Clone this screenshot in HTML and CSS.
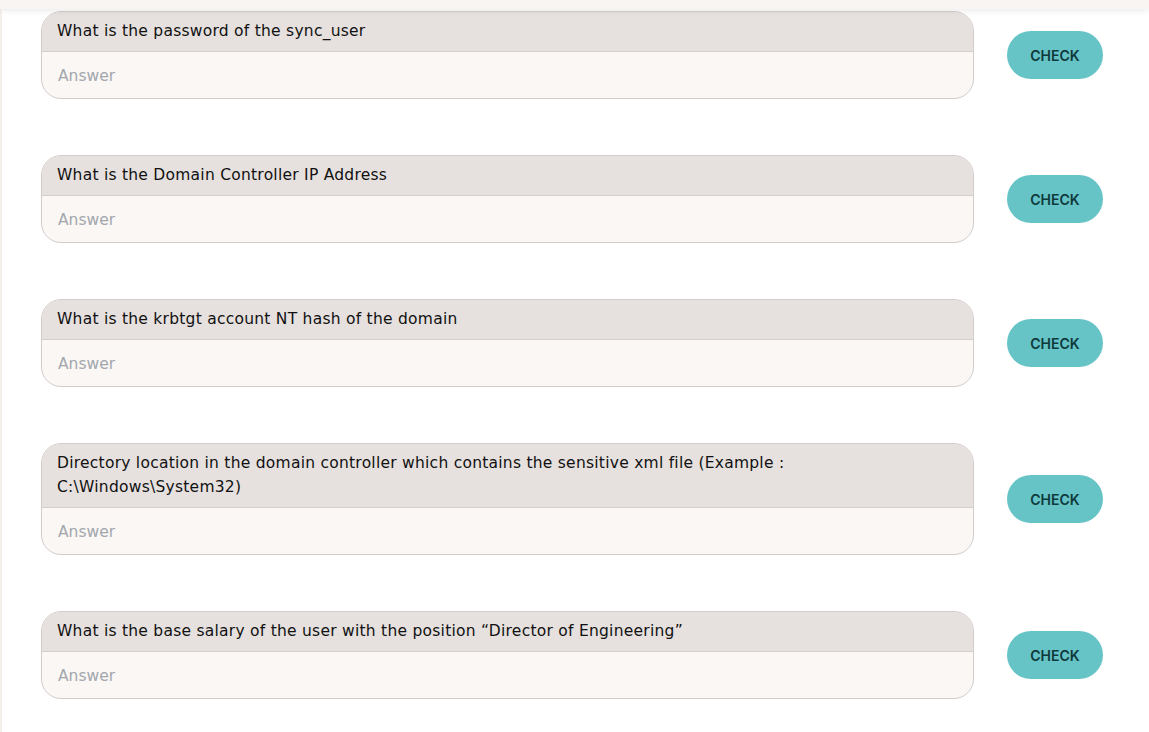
FILE: index.html
```html
<!DOCTYPE html>
<html lang="en">
<head>
<meta charset="utf-8">
<title>Questions</title>
<link rel="stylesheet" href="styles.css">
</head>
<body>
<div class="topbar"></div>
<main class="page">
  <div class="row">
    <div class="card">
      <div class="question">What is the password of the sync_user</div>
      <input class="answer" type="text" placeholder="Answer">
    </div>
    <button class="check">CHECK</button>
  </div>
  <div class="row">
    <div class="card">
      <div class="question">What is the Domain Controller IP Address</div>
      <input class="answer" type="text" placeholder="Answer">
    </div>
    <button class="check">CHECK</button>
  </div>
  <div class="row">
    <div class="card">
      <div class="question">What is the krbtgt account NT hash of the domain</div>
      <input class="answer" type="text" placeholder="Answer">
    </div>
    <button class="check">CHECK</button>
  </div>
  <div class="row">
    <div class="card">
      <div class="question">Directory location in the domain controller which contains the sensitive xml file (Example : C:\Windows\System32)</div>
      <input class="answer" type="text" placeholder="Answer">
    </div>
    <button class="check">CHECK</button>
  </div>
  <div class="row">
    <div class="card">
      <div class="question">What is the base salary of the user with the position “Director of Engineering”</div>
      <input class="answer" type="text" placeholder="Answer">
    </div>
    <button class="check">CHECK</button>
  </div>
</main>
</body>
</html>
```
FILE: styles.css
```css
html, body {
  margin: 0;
  padding: 0;
  background: #ffffff;
  height: 100%;
  overflow: hidden;
}
body {
  font-family: "DejaVu Sans", "Inter", sans-serif;
  color: #1a1a1a;
}
.topbar {
  position: relative;
  z-index: 2;
  height: 9px;
  background: #f9f5f2;
  box-shadow: 0 2px 6px rgba(0, 0, 0, 0.08);
}
.page {
  border-left: 2px solid #f3efeb;
  min-height: 732px;
  padding: 2px 0 0 39px;
  display: flex;
  flex-direction: column;
  gap: 56px;
}
.row {
  display: flex;
  align-items: center;
  gap: 33px;
}
.card {
  width: 933px;
  box-sizing: border-box;
  border: 1px solid #d3cccb;
  border-radius: 20px;
  overflow: hidden;
  background: #faf7f4;
  display: flex;
  flex-direction: column;
}
.question {
  background: #e6e1df;
  padding: 7px 15px 8px;
  font-size: 15.5px;
  letter-spacing: 0.25px;
  line-height: 24px;
  color: #111;
  border-bottom: 1px solid #d3cdcb;
}
.answer {
  display: block;
  height: 46px;
  box-sizing: border-box;
  border: none;
  outline: none;
  background: transparent;
  padding: 1px 16px 0;
  font-family: inherit;
  font-size: 15.5px;
  color: #111;
}
.answer::placeholder {
  color: #a3a6ae;
}
.check {
  width: 96px;
  height: 48px;
  border: none;
  border-radius: 24px;
  background: #66c3c6;
  color: #0e3a3c;
  font-family: "Inter", sans-serif;
  font-size: 14px;
  font-weight: 600;
  padding: 0;
}
```
